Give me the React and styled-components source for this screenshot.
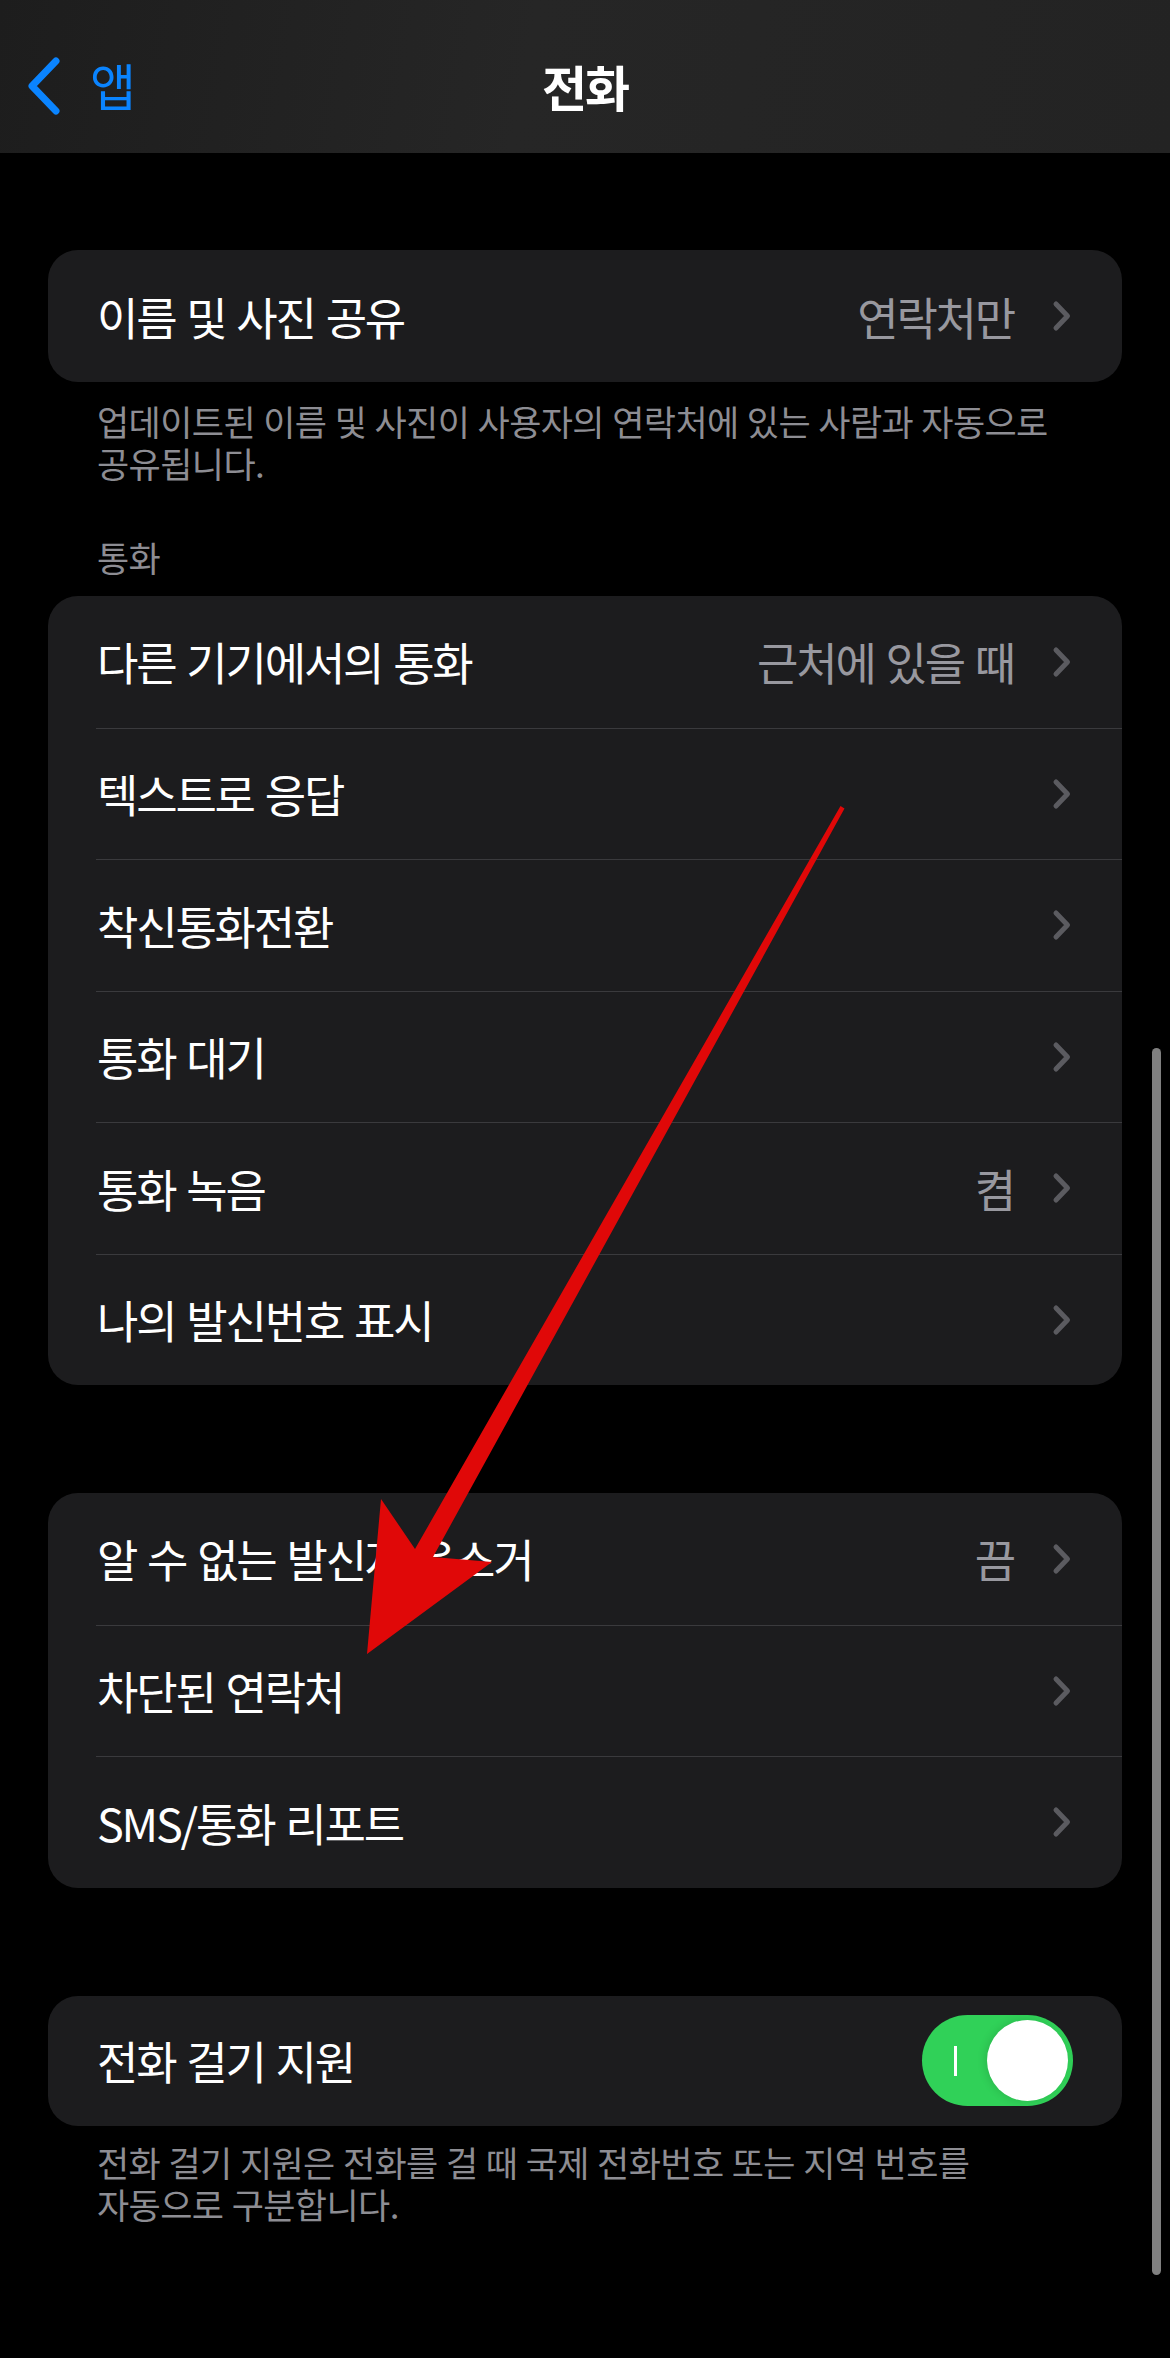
import React from "react";
import styled, { createGlobalStyle } from "styled-components";

const GlobalStyle = createGlobalStyle`
  html, body {
    margin: 0;
    padding: 0;
    background: #000;
  }
  body {
    font-family: "Noto Sans CJK KR", "Noto Sans", sans-serif;
    -webkit-font-smoothing: antialiased;
  }
  * { box-sizing: border-box; }
`;

const Page = styled.div`
  position: relative;
  width: 1170px;
  min-height: 2358px;
  background: #000;
  overflow: hidden;
`;

const NavBar = styled.header`
  height: 153px;
  padding-top: 18px;
  display: grid;
  grid-template-columns: 1fr auto 1fr;
  align-items: center;
  background: linear-gradient(100deg, #1d1d1d 0%, #262626 45%, #232323 100%);
`;

const BackButton = styled.div`
  display: flex;
  align-items: center;
  padding-left: 24px;
  color: #0a84ff;
  font-size: 50px;
  letter-spacing: -1px;
  line-height: 1;
`;

const BackLabel = styled.span`
  margin-left: 26px;
  margin-top: -4px;
`;

const Title = styled.h1`
  margin: 0;
  color: #fff;
  font-size: 49px;
  font-weight: 700;
  letter-spacing: -2px;
  line-height: 1;
`;

const Content = styled.main`
  padding: 97px 48px 0;
  display: flex;
  flex-direction: column;
`;

const Card = styled.section`
  background: #1c1c1e;
  border-radius: 30px;
  overflow: hidden;
  margin-top: ${(p) => p.$gap || 0}px;
`;

const Row = styled.div`
  height: ${(p) => p.$h || 131.5}px;
  margin-left: 48px;
  padding: 0 ${(p) => p.$pr || 50}px 0 1px;
  display: flex;
  align-items: center;
  & + & {
    border-top: 1px solid #3a3a3d;
  }
`;

const Label = styled.span`
  flex: 1;
  color: #fff;
  font-size: 45px;
  letter-spacing: -2.2px;
  word-spacing: 3px;
  line-height: 1;
  white-space: nowrap;
`;

const Value = styled.span`
  color: #98989f;
  font-size: 45px;
  letter-spacing: -2.2px;
  word-spacing: 3px;
  line-height: 1;
  margin-right: 38px;
  white-space: nowrap;
`;

const Footnote = styled.p`
  margin: ${(p) => p.$mt || 18}px 0 0;
  padding: 0 48px 0 49px;
  color: #8d8d93;
  font-size: 35px;
  letter-spacing: -0.6px;
  word-spacing: 1px;
  line-height: 42px;
  word-break: keep-all;
`;

const SectionHeader = styled.h2`
  margin: 51px 0 18px;
  padding-left: 49px;
  color: #8d8d93;
  font-size: 35px;
  font-weight: 400;
  letter-spacing: -0.6px;
  line-height: 43px;
`;

const ToggleTrack = styled.div`
  position: relative;
  width: 151px;
  height: 91px;
  border-radius: 46px;
  background: ${(p) => (p.$on ? "#30d158" : "#39393d")};
  flex-shrink: 0;
`;

const ToggleMark = styled.span`
  position: absolute;
  left: 32px;
  top: 31px;
  width: 3px;
  height: 30px;
  background: #fff;
`;

const ToggleKnob = styled.span`
  position: absolute;
  top: 5px;
  right: 5px;
  width: 81px;
  height: 81px;
  border-radius: 50%;
  background: #fff;
  box-shadow: -2px 0 8px rgba(0, 0, 0, 0.12);
`;

const ScrollIndicator = styled.div`
  position: absolute;
  left: 1152px;
  top: 1048px;
  width: 9px;
  height: 1227px;
  border-radius: 5px;
  background: #808080;
`;

const ArrowOverlay = styled.svg`
  position: absolute;
  left: 0;
  top: 0;
  pointer-events: none;
`;

const Chevron = () => (
  <svg width="20" height="32" viewBox="0 0 20 32">
    <path
      d="M4 4 L15.5 16 L4 28"
      fill="none"
      stroke="#5b5b60"
      strokeWidth="5"
      strokeLinecap="round"
      strokeLinejoin="round"
    />
  </svg>
);

const BackChevron = () => (
  <svg width="40" height="60" viewBox="0 0 40 60">
    <path
      d="M32 5 L8 30 L32 55"
      fill="none"
      stroke="#0a84ff"
      strokeWidth="7"
      strokeLinecap="round"
      strokeLinejoin="round"
    />
  </svg>
);

const LinkRow = ({ label, value }) => (
  <Row>
    <Label>{label}</Label>
    {value && <Value>{value}</Value>}
    <Chevron />
  </Row>
);

const Toggle = ({ on }) => (
  <ToggleTrack $on={on}>
    <ToggleMark />
    <ToggleKnob />
  </ToggleTrack>
);

export default function App() {
  return (
    <Page>
      <GlobalStyle />
      <NavBar>
        <BackButton>
          <BackChevron />
          <BackLabel>앱</BackLabel>
        </BackButton>
        <Title>전화</Title>
        <div />
      </NavBar>
      <Content>
        <Card>
          <Row $h={132}>
            <Label>이름 및 사진 공유</Label>
            <Value>연락처만</Value>
            <Chevron />
          </Row>
        </Card>
        <Footnote>
          업데이트된 이름 및 사진이 사용자의 연락처에 있는 사람과 자동으로
          공유됩니다.
        </Footnote>

        <SectionHeader>통화</SectionHeader>
        <Card>
          <LinkRow label="다른 기기에서의 통화" value="근처에 있을 때" />
          <LinkRow label="텍스트로 응답" />
          <LinkRow label="착신통화전환" />
          <LinkRow label="통화 대기" />
          <LinkRow label="통화 녹음" value="켬" />
          <LinkRow label="나의 발신번호 표시" />
        </Card>

        <Card $gap={108}>
          <LinkRow label="알 수 없는 발신자 음소거" value="끔" />
          <LinkRow label="차단된 연락처" />
          <LinkRow label="SMS/통화 리포트" />
        </Card>

        <Card $gap={108}>
          <Row $h={130} $pr={49}>
            <Label>전화 걸기 지원</Label>
            <Toggle on />
          </Row>
        </Card>
        <Footnote $mt={15}>
          전화 걸기 지원은 전화를 걸 때 국제 전화번호 또는 지역 번호를
          자동으로 구분합니다.
        </Footnote>
      </Content>

      <ScrollIndicator />

      <ArrowOverlay width="1170" height="2358" viewBox="0 0 1170 2358">
        <polygon
          points="840.5,806 844.5,808.5 433,1557 492,1562 367,1654 381,1499 415,1549"
          fill="#e00808"
        />
      </ArrowOverlay>
    </Page>
  );
}
